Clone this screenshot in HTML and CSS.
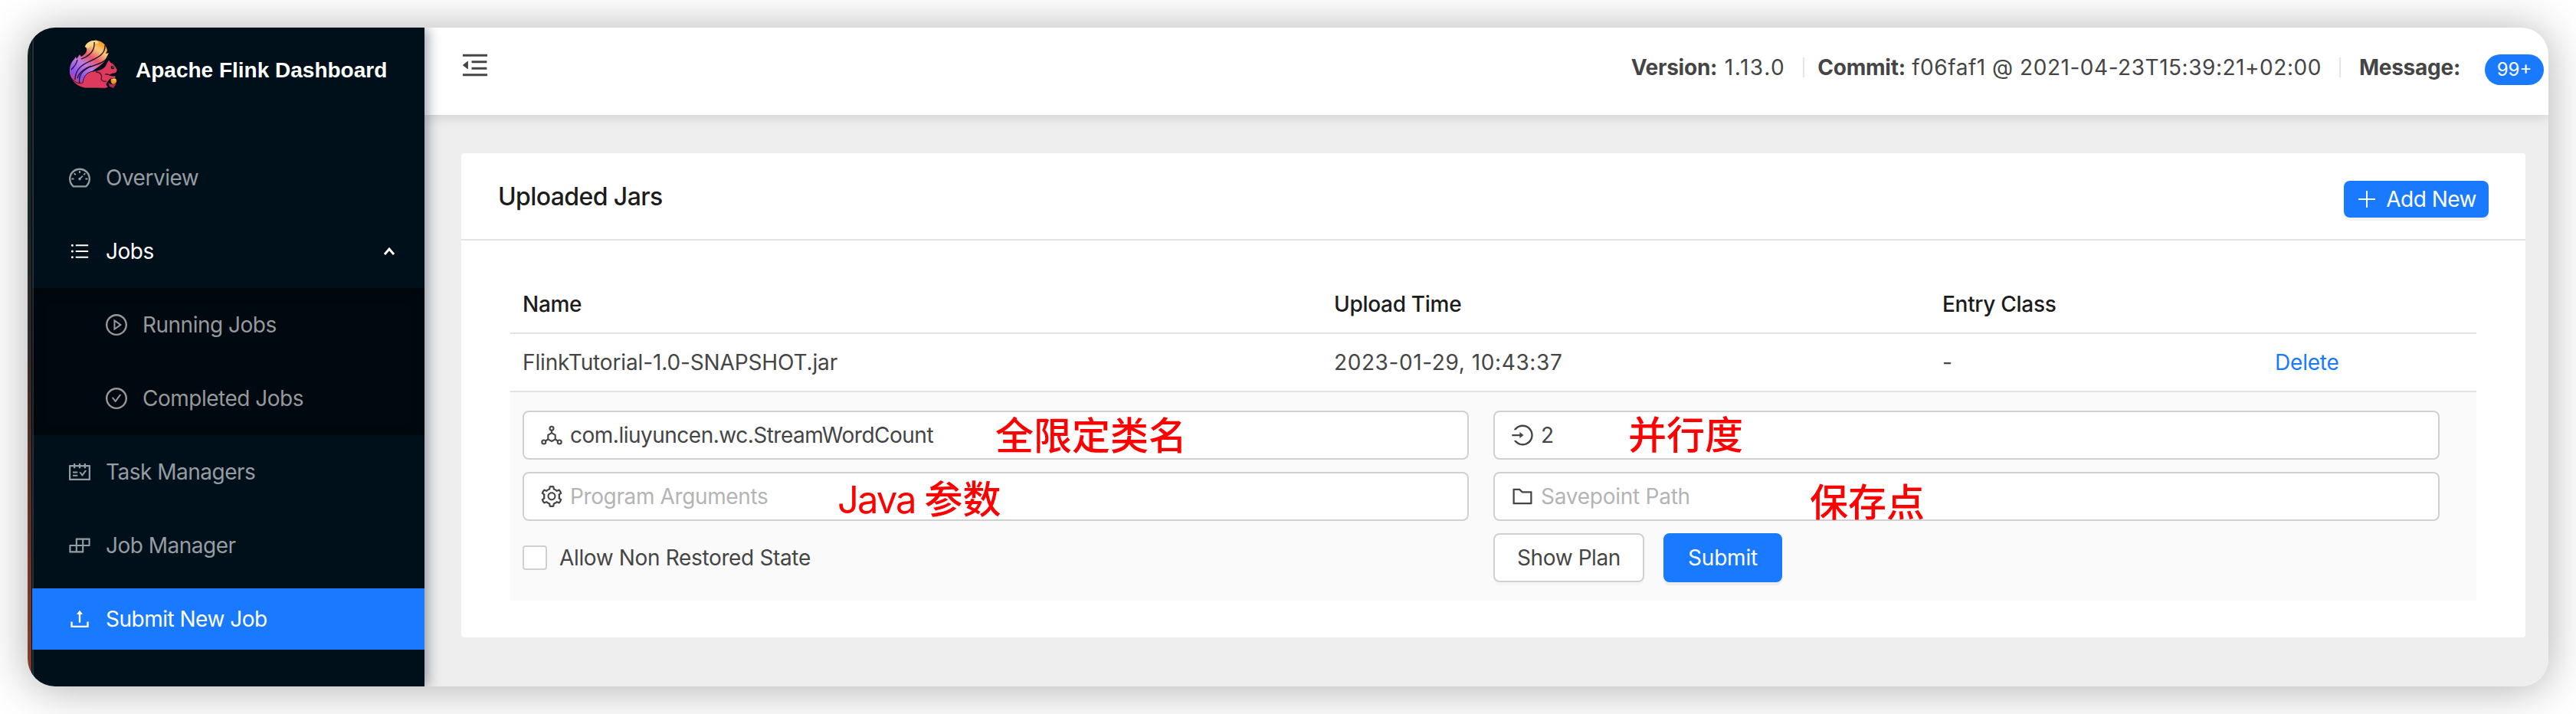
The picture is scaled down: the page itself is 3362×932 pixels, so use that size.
FILE: index.html
```html
<!DOCTYPE html>
<html lang="en">
<head>
<meta charset="utf-8">
<title>Apache Flink Dashboard</title>
<link rel="stylesheet" href="styles.css">
</head>
<body>
<div class="window">
  <div class="edge"></div>
  <aside class="sidebar">
    <div class="brand">
      <svg class="brand-logo" viewBox="0 0 62 64">
        <defs>
          <linearGradient id="tail" x1="0.75" y1="0" x2="0.2" y2="1">
            <stop offset="0" stop-color="#f79a1c"/>
            <stop offset="0.16" stop-color="#fbc878"/>
            <stop offset="0.36" stop-color="#e8546a"/>
            <stop offset="0.55" stop-color="#c07ae0"/>
            <stop offset="0.78" stop-color="#8d4ff0"/>
            <stop offset="1" stop-color="#e0395f"/>
          </linearGradient>
        </defs>
        <path fill="url(#tail)" d="M20 9C22 3 29 0 36 1C43 2 48 7 49 14L47 18L51 17L48 23C46 30 39 34 32 39C26 43 22 47 21 53L23 62C12 62 3 55 0 44C-1 37 1 30 6 25L8 22L9 25L13 19L15 22C20 19 23 16 22 11Z"/>
        <path fill="#fbd58a" d="M20 9C22 3 29 0 36 1L38 5C33 4 28 8 24 11Z"/>
        <g fill="none" stroke="#1a0b26" stroke-width="1.3">
          <path d="M46 7C47 20 34 24 22 30C12 35 7 42 7 52"/>
          <path d="M51 20C46 31 34 32 25 36C15 41 11 49 13 58"/>
          <path d="M32 3C33 14 26 21 15 25"/>
          <path d="M10 26C9 32 5 36 2 39M28 34C22 36 12 42 10 50"/>
        </g>
        <path fill="#de3a5e" stroke="#00101b" stroke-width="0.8" d="M49 29L51 26L54 30C58 31 60 35 62 39C62 42 60 44 56 44L52 46L55 47L60 47L60 50L53 51C51 53 49 55 48 58L50 62C47 64 43 63 38 63H20C10 61 5 56 2 50C8 56 12 58 17 56C18 48 22 42 31 41C38 40 45 38 47 33Z"/>
        <g fill="none" stroke="#4b1028" stroke-width="1.3">
          <path d="M34 42C40 42 43 46 41 51C42 54 45 55 48 54M46 45C49 44 51 46 53 46"/>
        </g>
        <circle cx="56" cy="36" r="2.3" fill="#1a1a22"/>
        <circle cx="56.6" cy="35.4" r="0.7" fill="#8fb7b0"/>
        <path fill="#f79a1c" d="M54 51C57 50 60 50 61 52C62 56 59 57 57 58C54 57 53 54 54 51Z"/>
        <path fill="#ffd27a" d="M56 51L60 51L58 54Z"/>
        <path fill="#b32a4c" d="M50 56L54 58L61 57L57 63L52 61Z"/>
      </svg>
      <span class="brand-name">Apache Flink Dashboard</span>
    </div>
    <nav class="menu">
      <a class="item"><svg class="icon" viewBox="64 64 896 896"><path d="M924.8 385.6a446.7 446.7 0 0 0-96-142.4 446.7 446.7 0 0 0-142.4-96C631.1 123.8 572.5 112 512 112s-119.1 11.8-174.4 35.2a446.7 446.7 0 0 0-142.4 96 446.7 446.7 0 0 0-96 142.4C75.8 440.9 64 499.5 64 560c0 132.7 58.3 257.7 159.9 343.1l1.7 1.4c5.8 4.8 13.1 7.5 20.6 7.5h531.7c7.5 0 14.8-2.7 20.6-7.5l1.7-1.4C901.7 817.7 960 692.7 960 560c0-60.5-11.9-119.1-35.2-174.4zM761.4 836H262.6A371.12 371.12 0 0 1 140 560c0-99.4 38.7-192.8 109-263 70.3-70.3 163.7-109 263-109 99.4 0 192.8 38.7 263 109 70.3 70.3 109 163.7 109 263 0 105.6-44.5 205.5-122.6 276zM623.5 421.5a8.03 8.03 0 0 0-11.3 0L527.7 506c-18.7-5-39.4-.2-54.1 14.5a55.95 55.95 0 0 0 0 79.2 55.95 55.95 0 0 0 79.2 0 55.87 55.87 0 0 0 14.5-54.1l84.5-84.5c3.1-3.1 3.1-8.2 0-11.3l-28.3-28.3zM490 320h44c4.4 0 8-3.6 8-8v-80c0-4.4-3.6-8-8-8h-44c-4.4 0-8 3.6-8 8v80c0 4.4 3.6 8 8 8zm260 218v44c0 4.4 3.6 8 8 8h80c4.4 0 8-3.6 8-8v-44c0-4.4-3.6-8-8-8h-80c-4.4 0-8 3.6-8 8zm12.7-197.2l-31.1-31.1a8.03 8.03 0 0 0-11.3 0l-56.6 56.6a8.03 8.03 0 0 0 0 11.3l31.1 31.1c3.1 3.1 8.2 3.1 11.3 0l56.6-56.6c3.1-3.1 3.1-8.2 0-11.3zm-458.6-31.1a8.03 8.03 0 0 0-11.3 0l-31.1 31.1a8.03 8.03 0 0 0 0 11.3l56.6 56.6c3.1 3.1 8.2 3.1 11.3 0l31.1-31.1c3.1-3.1 3.1-8.2 0-11.3l-56.6-56.6zM262 530h-80c-4.4 0-8 3.6-8 8v44c0 4.4 3.6 8 8 8h80c4.4 0 8-3.6 8-8v-44c0-4.4-3.6-8-8-8z"/></svg><span class="label">Overview</span></a>
      <a class="item open"><svg class="icon" viewBox="0 0 1024 1024"><path d="M912 192H328c-4.4 0-8 3.6-8 8v56c0 4.4 3.6 8 8 8h584c4.4 0 8-3.6 8-8v-56c0-4.4-3.6-8-8-8zm0 284H328c-4.4 0-8 3.6-8 8v56c0 4.4 3.6 8 8 8h584c4.4 0 8-3.6 8-8v-56c0-4.4-3.6-8-8-8zm0 284H328c-4.4 0-8 3.6-8 8v56c0 4.4 3.6 8 8 8h584c4.4 0 8-3.6 8-8v-56c0-4.4-3.6-8-8-8zM104 228a56 56 0 1 0 112 0 56 56 0 1 0-112 0zm0 284a56 56 0 1 0 112 0 56 56 0 1 0-112 0zm0 284a56 56 0 1 0 112 0 56 56 0 1 0-112 0z"/></svg><span class="label">Jobs</span><svg class="caret" viewBox="0 0 16 12"><path d="M2 10L8 3L14 10"/></svg></a>
      <div class="submenu">
        <a class="item sub"><svg class="icon" viewBox="64 64 896 896"><path d="M512 64C264.6 64 64 264.6 64 512s200.6 448 448 448 448-200.6 448-448S759.4 64 512 64zm0 820c-205.4 0-372-166.6-372-372s166.6-372 372-372 372 166.6 372 372-166.6 372-372 372z"/><path d="M719.4 499.1l-296.1-215A15.9 15.9 0 0 0 398 297v430c0 13.1 14.8 20.5 25.3 12.9l296.1-215a15.9 15.9 0 0 0 0-25.8zm-257.6 134V390.9L628.5 512 461.8 633.1z"/></svg><span class="label">Running Jobs</span></a>
        <a class="item sub"><svg class="icon" viewBox="64 64 896 896"><path d="M512 64C264.6 64 64 264.6 64 512s200.6 448 448 448 448-200.6 448-448S759.4 64 512 64zm0 820c-205.4 0-372-166.6-372-372s166.6-372 372-372 372 166.6 372 372-166.6 372-372 372z"/><path d="M699 353h-46.9c-10.2 0-19.9 4.9-25.9 13.3L469 584.3l-71.2-98.8c-6-8.3-15.6-13.3-25.9-13.3H325c-6.5 0-10.3 7.4-6.5 12.7l124.6 172.8a31.8 31.8 0 0 0 51.7 0l210.6-292c3.9-5.3.1-12.7-6.4-12.7z"/></svg><span class="label">Completed Jobs</span></a>
      </div>
      <a class="item"><svg class="icon" viewBox="64 64 896 896"><path d="M928 224H768v-56c0-4.4-3.6-8-8-8h-56c-4.4 0-8 3.6-8 8v56H548v-56c0-4.4-3.6-8-8-8h-56c-4.4 0-8 3.6-8 8v56H328v-56c0-4.4-3.6-8-8-8h-56c-4.4 0-8 3.6-8 8v56H96c-17.7 0-32 14.3-32 32v576c0 17.7 14.3 32 32 32h832c17.7 0 32-14.3 32-32V256c0-17.7-14.3-32-32-32zm-40 568H136V296h120v56c0 4.4 3.6 8 8 8h56c4.4 0 8-3.6 8-8v-56h148v56c0 4.4 3.6 8 8 8h56c4.4 0 8-3.6 8-8v-56h148v56c0 4.4 3.6 8 8 8h56c4.4 0 8-3.6 8-8v-56h120v496zM416 496H232c-4.4 0-8 3.6-8 8v48c0 4.4 3.6 8 8 8h184c4.4 0 8-3.6 8-8v-48c0-4.4-3.6-8-8-8zm0 136H232c-4.4 0-8 3.6-8 8v48c0 4.4 3.6 8 8 8h184c4.4 0 8-3.6 8-8v-48c0-4.4-3.6-8-8-8zm308.2-177.4L620.6 598.3l-52.8-73.1c-3-4.2-7.8-6.6-12.9-6.6H500c-6.5 0-10.3 7.4-6.5 12.7l114.1 158.2a15.9 15.9 0 0 0 25.8 0l165-228.7c3.8-5.3 0-12.7-6.5-12.7H737c-5-.1-9.8 2.4-12.8 6.5z"/></svg><span class="label">Task Managers</span></a>
      <a class="item"><svg class="icon" viewBox="64 64 896 896"><path d="M916 210H376c-17.7 0-32 14.3-32 32v236H108c-17.7 0-32 14.3-32 32v272c0 17.7 14.3 32 32 32h540c17.7 0 32-14.3 32-32V546h236c17.7 0 32-14.3 32-32V242c0-17.7-14.3-32-32-32zm-504 68h200v200H412V278zm-68 468H144V546h200v200zm268 0H412V546h200v200zm268-268H680V278h200v200z"/></svg><span class="label">Job Manager</span></a>
      <a class="item active"><svg class="icon" viewBox="64 64 896 896"><path d="M400 317.7h73.9V656c0 4.4 3.6 8 8 8h60c4.4 0 8-3.6 8-8V317.7H624c6.7 0 10.4-7.7 6.3-12.9L518.3 163a8 8 0 0 0-12.6 0l-112 141.7c-4.1 5.3-.4 13 6.3 13zM878 626h-60c-4.4 0-8 3.6-8 8v154H214V634c0-4.4-3.6-8-8-8h-60c-4.4 0-8 3.6-8 8v198c0 17.7 14.3 32 32 32h684c17.7 0 32-14.3 32-32V634c0-4.4-3.6-8-8-8z"/></svg><span class="label">Submit New Job</span></a>
    </nav>
  </aside>
  <main class="main">
    <header class="topbar">
      <svg class="fold" viewBox="64 64 896 896"><path d="M408 442h480c4.4 0 8-3.6 8-8v-56c0-4.4-3.6-8-8-8H408c-4.4 0-8 3.6-8 8v56c0 4.4 3.6 8 8 8zm-8 204c0 4.4 3.6 8 8 8h480c4.4 0 8-3.6 8-8v-56c0-4.4-3.6-8-8-8H408c-4.4 0-8 3.6-8 8v56zm504-486H120c-4.4 0-8 3.6-8 8v56c0 4.4 3.6 8 8 8h784c4.4 0 8-3.6 8-8v-56c0-4.4-3.6-8-8-8zm0 632H120c-4.4 0-8 3.6-8 8v56c0 4.4 3.6 8 8 8h784c4.4 0 8-3.6 8-8v-56c0-4.4-3.6-8-8-8zM115.4 518.9L271.7 642c5.8 4.6 14.4.5 14.4-6.9V388.9c0-7.4-8.5-11.5-14.4-6.9L115.4 505.1a8.74 8.74 0 0 0 0 13.8z"/></svg>
      <div class="status">
        <span class="version"><strong>Version:</strong> 1.13.0</span>
        <i class="divider"></i>
        <span class="commit"><strong>Commit:</strong> f06faf1 @ 2021-04-23T15:39:21+02:00</span>
        <i class="divider"></i>
        <strong class="message">Message:</strong>
        <span class="badge">99+</span>
      </div>
    </header>
    <section class="card">
      <div class="card-head">
        <h1 class="card-title">Uploaded Jars</h1>
        <button class="add"><svg class="plus" viewBox="0 0 24 24"><path d="M12 1V23M1 12H23"/></svg><span>Add New</span></button>
      </div>
      <div class="table">
        <div class="row head"><span>Name</span><span>Upload Time</span><span>Entry Class</span><span></span></div>
        <div class="row"><span class="td-name">FlinkTutorial-1.0-SNAPSHOT.jar</span><span class="td-time">2023-01-29, 10:43:37</span><span>-</span><a class="delete">Delete</a></div>
        <div class="form">
          <div class="field"><svg class="icon" viewBox="0 0 28 28"><g class="line"><path d="M14 11.2L18.7 13.9V19.3L14 22L9.3 19.3V13.9Z"/><circle cx="14" cy="5.2" r="2.5"/><circle cx="3.8" cy="23" r="2.5"/><circle cx="24.2" cy="23" r="2.5"/><path d="M14 7.7V11.2M9.3 19.3L6 21.6M18.7 19.3L22 21.6"/></g></svg><span class="value v-class">com.liuyuncen.wc.StreamWordCount</span></div>
          <div class="field"><svg class="icon" viewBox="64 64 896 896"><path d="M521.7 82c-152.5-.4-286.7 78.5-363.4 197.7-3.4 5.3.4 12.3 6.7 12.3h70.3c4.8 0 9.3-2.1 12.3-5.8 7-8.5 14.5-16.7 22.4-24.5 32.6-32.5 70.5-58.1 112.7-75.9 43.6-18.4 90-27.8 137.9-27.8 47.9 0 94.3 9.3 137.9 27.8 42.2 17.8 80.1 43.4 112.7 75.9 32.6 32.5 58.1 70.4 76 112.5C865.7 417.8 875 464.1 875 512c0 47.9-9.4 94.2-27.8 137.8-17.8 42.1-43.4 80-76 112.5s-70.5 58.1-112.7 75.9A352.8 352.8 0 0 1 520.6 866c-47.9 0-94.3-9.4-137.9-27.8A353.84 353.84 0 0 1 270 762.3c-7.9-7.9-15.3-16.1-22.4-24.5-3-3.7-7.6-5.8-12.3-5.8H165c-6.3 0-10.2 7-6.7 12.3C234.9 863.2 368.5 942 520.6 942c236.2 0 428-190.1 430.4-425.6C953.4 277.1 761.3 82.6 521.7 82zM395.02 624v-76h-314c-4.4 0-8-3.6-8-8v-56c0-4.4 3.6-8 8-8h314v-76c0-6.7 7.8-10.5 13-6.3l141.9 112a8 8 0 0 1 0 12.6l-141.9 112c-5.2 4.1-13 .4-13-6.3z"/></svg><span class="value">2</span></div>
          <div class="field"><svg class="icon" viewBox="64 64 896 896"><path d="M924.8 625.7l-65.5-56c3.1-19 4.7-38.4 4.7-57.8s-1.6-38.8-4.7-57.8l65.5-56a32.03 32.03 0 0 0 9.3-35.2l-.9-2.6a443.74 443.74 0 0 0-79.7-137.9l-1.8-2.1a32.12 32.12 0 0 0-35.1-9.5l-81.3 28.9c-30-24.6-63.5-44-99.7-57.6l-15.7-85a32.05 32.05 0 0 0-25.8-25.7l-2.7-.5c-52.1-9.4-106.9-9.4-159 0l-2.7.5a32.05 32.05 0 0 0-25.8 25.7l-15.8 85.4a351.86 351.86 0 0 0-99 57.4l-81.9-29.1a32 32 0 0 0-35.1 9.5l-1.8 2.1a446.02 446.02 0 0 0-79.7 137.9l-.9 2.6c-4.5 12.5-.8 26.5 9.3 35.2l66.3 56.6c-3.1 18.8-4.6 38-4.6 57.1 0 19.2 1.5 38.4 4.6 57.1L99 625.5a32.03 32.03 0 0 0-9.3 35.2l.9 2.6c18.1 50.4 44.9 96.9 79.7 137.9l1.8 2.1a32.12 32.12 0 0 0 35.1 9.5l81.9-29.1c29.8 24.5 63.1 43.9 99 57.4l15.8 85.4a32.05 32.05 0 0 0 25.8 25.7l2.7.5a449.4 449.4 0 0 0 159 0l2.7-.5a32.05 32.05 0 0 0 25.8-25.7l15.7-85a350 350 0 0 0 99.7-57.6l81.3 28.9a32 32 0 0 0 35.1-9.5l1.8-2.1c34.8-41.1 61.6-87.5 79.7-137.9l.9-2.6c4.5-12.3.8-26.3-9.3-35zM788.3 465.9c2.5 15.1 3.8 30.6 3.8 46.1s-1.3 31-3.8 46.1l-6.6 40.1 74.7 63.9a370.03 370.03 0 0 1-42.6 73.6L721 702.8l-31.4 25.8c-23.9 19.6-50.5 35-79.3 45.8l-38.1 14.3-17.9 97a377.5 377.5 0 0 1-85 0l-17.9-97.2-37.8-14.5c-28.5-10.8-55-26.2-78.7-45.7l-31.4-25.9-93.4 33.2c-17-22.9-31.2-47.6-42.6-73.6l75.5-64.5-6.5-40c-2.4-14.9-3.7-30.3-3.7-45.5 0-15.3 1.2-30.6 3.7-45.5l6.5-40-75.5-64.5c11.3-26.1 25.6-50.7 42.6-73.6l93.4 33.2 31.4-25.9c23.7-19.5 50.2-34.9 78.7-45.7l37.9-14.3 17.9-97.2c28.1-3.2 56.8-3.2 85 0l17.9 97 38.1 14.3c28.7 10.8 55.4 26.2 79.3 45.8l31.4 25.8 92.8-32.9c17 22.9 31.2 47.6 42.6 73.6L781.8 426l6.5 39.9z"/><path d="M512 326c-97.2 0-176 78.8-176 176s78.8 176 176 176 176-78.8 176-176-78.8-176-176-176zm79.2 255.2A111.6 111.6 0 0 1 512 614c-29.9 0-58-11.7-79.2-32.8A111.6 111.6 0 0 1 400 502c0-29.9 11.7-58 32.8-79.2C454 401.6 482.1 390 512 390c29.9 0 58 11.6 79.2 32.8A111.6 111.6 0 0 1 624 502c0 29.9-11.7 58-32.8 79.2z"/></svg><span class="value hint">Program Arguments</span></div>
          <div class="field"><svg class="icon" viewBox="64 64 896 896"><path d="M880 298.4H521L403.7 186.2a8.15 8.15 0 0 0-5.5-2.2H144c-17.7 0-32 14.3-32 32v592c0 17.7 14.3 32 32 32h736c17.7 0 32-14.3 32-32V330.4c0-17.7-14.3-32-32-32zM840 768H184V256h188.5l119.6 114.4H840V768z"/></svg><span class="value hint path">Savepoint Path</span></div>
          <label class="check"><i class="box"></i><span>Allow Non Restored State</span></label>
          <div class="actions"><button class="btn plan">Show Plan</button><button class="btn primary">Submit</button></div>
        </div>
      </div>
    </section>
  </main>
</div>
<div class="note note-class">全限定类名</div>
<div class="note note-parallel">并行度</div>
<div class="note note-args"><span class="latin">Java</span>参数</div>
<div class="note note-savepoint">保存点</div>
</body>
</html>
```
FILE: styles.css
```css
* { box-sizing: border-box; }
body {
  margin: 0;
  width: 3362px;
  height: 932px;
  padding: 36px;
  background: #fff;
  overflow: hidden;
  position: relative;
  isolation: isolate;
  font-family: Inter, "Noto Sans CJK SC", sans-serif;
  font-size: 28px;
  line-height: 44px;
  color: #454545;
}
svg { display: block; flex: none; }
button { font: inherit; margin: 0; }
.window {
  display: flex;
  width: 3290px;
  height: 860px;
  border-radius: 36px;
  overflow: hidden;
  background: #eee;
}
body::before {
  content: "";
  position: absolute;
  z-index: -1;
  left: 36px;
  top: 36px;
  width: 3290px;
  height: 860px;
  border-radius: 36px;
  box-shadow: 0 3px 60px rgba(0, 0, 0, .32);
}
.edge {
  width: 6px;
  flex: none;
  border-right: 1px solid #000;
  background: linear-gradient(#10211f 0%, #1c2927 30%, #3a2d28 52%, #6d3527 75%, #91442b 100%);
}
.sidebar {
  width: 512px;
  flex: none;
  background: #00101b;
  box-shadow: 4px 0 16px rgba(0, 21, 41, .4), inset 2px 0 0 rgba(255, 255, 255, .14);
  position: relative;
  z-index: 2;
}
.brand {
  height: 148px;
  padding: 16px 0 0 49px;
  display: flex;
  align-items: flex-start;
  gap: 24px;
}
.brand-logo { width: 62px; height: 64px; }
.brand-name {
  font: bold 28px/36px "Liberation Sans", Arial, sans-serif;
  padding-top: 22px;
  color: #fff;
  white-space: nowrap;
}
.item {
  display: flex;
  align-items: center;
  height: 80px;
  margin: 8px 0 16px;
  padding: 0 38px 0 48px;
  color: #959ca2;
}
.item + .item, .submenu + .item { margin-top: 0; }
.icon { width: 28px; height: 28px; fill: currentColor; }
.label { margin-left: 20px; flex: 1; white-space: nowrap; letter-spacing: -.5px; }
.open { color: #fff; margin-bottom: 8px; }
.caret { width: 16px; height: 12px; fill: none; stroke: #fff; stroke-width: 3; }
.submenu {
  background: #00090f;
  padding: 8px 0;
  margin-bottom: 8px;
  box-shadow: inset 2px 0 0 rgba(255, 255, 255, .14), inset 0 4px 16px rgba(0, 0, 0, .4);
}
.sub { margin: 0 0 16px; padding-left: 96px; color: #96999b; }
.sub:last-child { margin-bottom: 0; }
.active { background: #1979ff; color: #fff; }
.main { flex: 1; display: flex; flex-direction: column; }
.topbar {
  height: 114px;
  flex: none;
  background: #fff;
  box-shadow: 0 2px 16px rgba(0, 0, 0, .15);
  display: flex;
  justify-content: space-between;
  align-items: flex-start;
  padding: 31px 6px 0 48px;
}
.fold { width: 36px; height: 36px; fill: #454545; }
.status {
  display: flex;
  align-items: center;
  height: 42px;
  white-space: nowrap;
}
.status strong { font-weight: 700; letter-spacing: -.25px; }
.version { letter-spacing: 1.6px; }
.commit { letter-spacing: .53px; }
.divider { width: 2px; height: 26px; background: #e4e4e4; margin: 0 17px 0 23px; }
.message { margin-left: 7px; }
.badge {
  margin: 6px 0 0 32px;
  width: 77px;
  height: 40px;
  border-radius: 20px;
  background: #1979ff;
  color: #fff;
  font-size: 24px;
  line-height: 40px;
  text-align: center;
}
.card { margin: 50px 30px 0 48px; height: 632px; background: #fff; border-radius: 4px; }
.card-head {
  height: 114px;
  border-bottom: 2px solid #e2e2e2;
  padding: 0 48px;
  display: flex;
  justify-content: space-between;
  align-items: center;
}
.card-title {
  margin: 0;
  padding-top: 2px;
  font-size: 32px;
  font-weight: 500;
  letter-spacing: -.6px;
  color: #1c1c1c;
}
.add {
  width: 189px;
  height: 48px;
  margin-top: 8px;
  padding: 0 16px;
  border: 0;
  border-radius: 8px;
  background: #1979ff;
  box-shadow: 0 4px 0 rgba(0, 0, 0, .05);
  color: #fff;
  letter-spacing: -.5px;
  display: flex;
  align-items: center;
  justify-content: space-between;
}
.plus { width: 24px; height: 24px; margin-left: 2px; stroke: #fff; stroke-width: 2; }
.table { margin: 48px 64px 0; }
.row {
  display: grid;
  grid-template-columns: 1059px 794px 434px 1fr;
  align-items: center;
  height: 76px;
  padding-left: 16px;
  border-bottom: 2px solid #e2e2e2;
}
.head { height: 74px; padding-bottom: 2px; font-weight: 500; color: #1c1c1c; letter-spacing: -.3px; }
.td-name { letter-spacing: -.13px; }
.td-time { letter-spacing: .6px; }
.delete { color: #1979ff; letter-spacing: -.2px; }
.form {
  display: grid;
  grid-template-columns: 1235px 1235px;
  grid-auto-rows: 64px;
  gap: 16px 32px;
  height: 272px;
  padding: 24px 0 0 16px;
  background: #fafafa;
}
.field {
  display: flex;
  align-items: center;
  gap: 10px;
  padding-left: 22px;
  border: 2px solid #d0d0d0;
  border-radius: 8px;
  background: #fff;
}
.line { fill: none; stroke: currentColor; stroke-width: 2.1; }
.v-class { letter-spacing: -.5px; }
.hint { color: #b4b4b4; letter-spacing: -.38px; }
.path { letter-spacing: -.25px; }
.check { display: flex; align-items: center; gap: 16px; letter-spacing: -.35px; }
.box { width: 32px; height: 32px; border: 2px solid #d0d0d0; border-radius: 4px; background: #fff; }
.actions { display: flex; gap: 25px; }
.btn { height: 64px; border-radius: 8px; padding: 0; box-shadow: 0 4px 0 rgba(0, 0, 0, .02); }
.plan { width: 197px; border: 2px solid #d0d0d0; background: #fff; color: #454545; letter-spacing: -.4px; }
.primary { width: 155px; border: 0; background: #1979ff; color: #fff; letter-spacing: -.2px; box-shadow: 0 4px 0 rgba(0, 0, 0, .05); }
.note {
  position: absolute;
  z-index: 3;
  font: 500 50px/60px "Noto Sans CJK SC", sans-serif;
  color: #f00;
  white-space: nowrap;
}
.latin { font-family: Inter, sans-serif; font-weight: 400; font-size: 49px; letter-spacing: -2px; margin-right: 12px; }
.note-class { left: 1299px; top: 535px; }
.note-parallel { left: 2125px; top: 534px; }
.note-args { left: 1093px; top: 618px; }
.note-savepoint { left: 2362px; top: 622px; }
```
